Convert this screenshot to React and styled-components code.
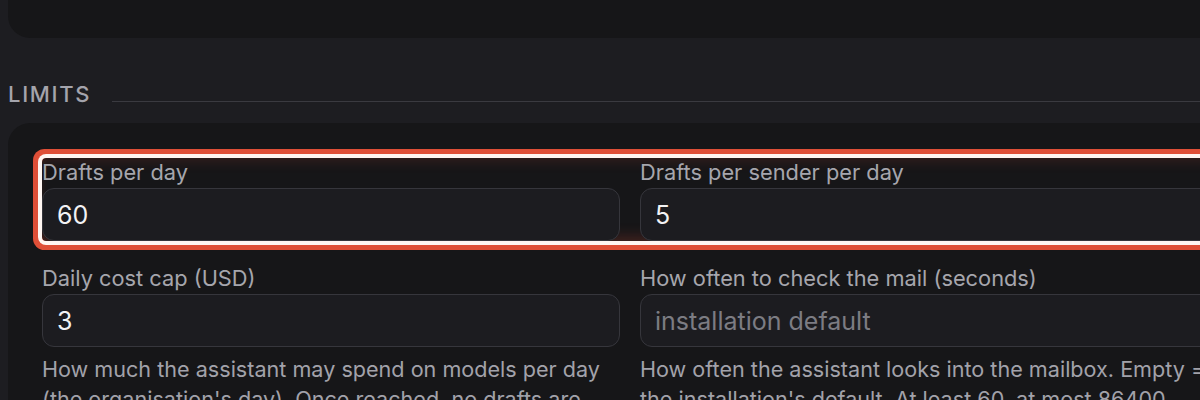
import React from 'react';
import styled, { createGlobalStyle } from 'styled-components';

const GlobalStyle = createGlobalStyle`
	html, body {
		margin: 0;
		background: #1d1d21;
		overflow: hidden;
	}
	body {
		font-family: Inter, "Noto Sans", sans-serif;
	}
`;

const Page = styled.div`
	width: 1270px;
	padding-left: 8px;
`;

const TopCard = styled.div`
	height: 38px;
	background: #161618;
	border-radius: 0 0 22px 22px;
`;

const SectionHeader = styled.div`
	display: flex;
	align-items: flex-end;
	gap: 21px;
	margin-top: 44px;
	height: 24px;
`;

const SectionTitle = styled.h2`
	margin: 0;
	font-size: 22px;
	font-weight: 500;
	letter-spacing: 1.7px;
	line-height: 24px;
	color: #a4a4ac;
`;

const Rule = styled.div`
	flex: 1;
	height: 1px;
	margin-bottom: 4px;
	background: #3a3a40;
`;

const Card = styled.section`
	margin-top: 17px;
	padding: 35px 34px 40px;
	background: #161618;
	border-radius: 22px;
	display: flex;
	flex-direction: column;
	gap: 23px;
`;

const Row = styled.div`
	display: grid;
	grid-template-columns: 578px 578px;
	column-gap: 20px;
	border-radius: 4px;
	box-shadow: ${(p) =>
		p.$highlight
			? '0 0 0 4px #fff6f2, 0 0 0 9px #df4f37, inset 0 -10px 14px -6px rgba(223, 79, 55, 0.24), inset 0 10px 14px -8px rgba(223, 79, 55, 0.18)'
			: 'none'};
`;

const Field = styled.div`
	display: flex;
	flex-direction: column;
`;

const Label = styled.label`
	font-size: 21.8px;
	line-height: 28px;
	color: #a6a6ad;
	margin-bottom: 2px;
`;

const Input = styled.input`
	box-sizing: border-box;
	height: 53px;
	padding: 0 14px;
	border: 1px solid #36363c;
	border-radius: 12px;
	background: #1c1c20;
	color: #f2f2f4;
	font-family: Inter, "Noto Sans", sans-serif;
	font-size: 25px;
	outline: none;

	&::placeholder {
		color: #7c7c83;
	}
`;

const Help = styled.p`
	margin: 7px 0 0;
	font-size: 21.6px;
	line-height: 30px;
	color: #a2a2aa;
`;

export default function App() {
	return (
		<>
			<GlobalStyle />
			<Page>
				<TopCard />
				<SectionHeader>
					<SectionTitle>LIMITS</SectionTitle>
					<Rule />
				</SectionHeader>
				<Card>
					<Row $highlight>
						<Field>
							<Label>Drafts per day</Label>
							<Input defaultValue="60" />
						</Field>
						<Field>
							<Label>Drafts per sender per day</Label>
							<Input defaultValue="5" />
						</Field>
					</Row>
					<Row>
						<Field>
							<Label>Daily cost cap (USD)</Label>
							<Input defaultValue="3" />
							<Help>
								How much the assistant may spend on models per day (the
								organisation's day). Once reached, no drafts are created
								until the next day.
							</Help>
						</Field>
						<Field>
							<Label>How often to check the mail (seconds)</Label>
							<Input placeholder="installation default" />
							<Help>
								How often the assistant looks into the mailbox. Empty = the
								installation's default. At least 60, at most 86400.
							</Help>
						</Field>
					</Row>
				</Card>
			</Page>
		</>
	);
}
